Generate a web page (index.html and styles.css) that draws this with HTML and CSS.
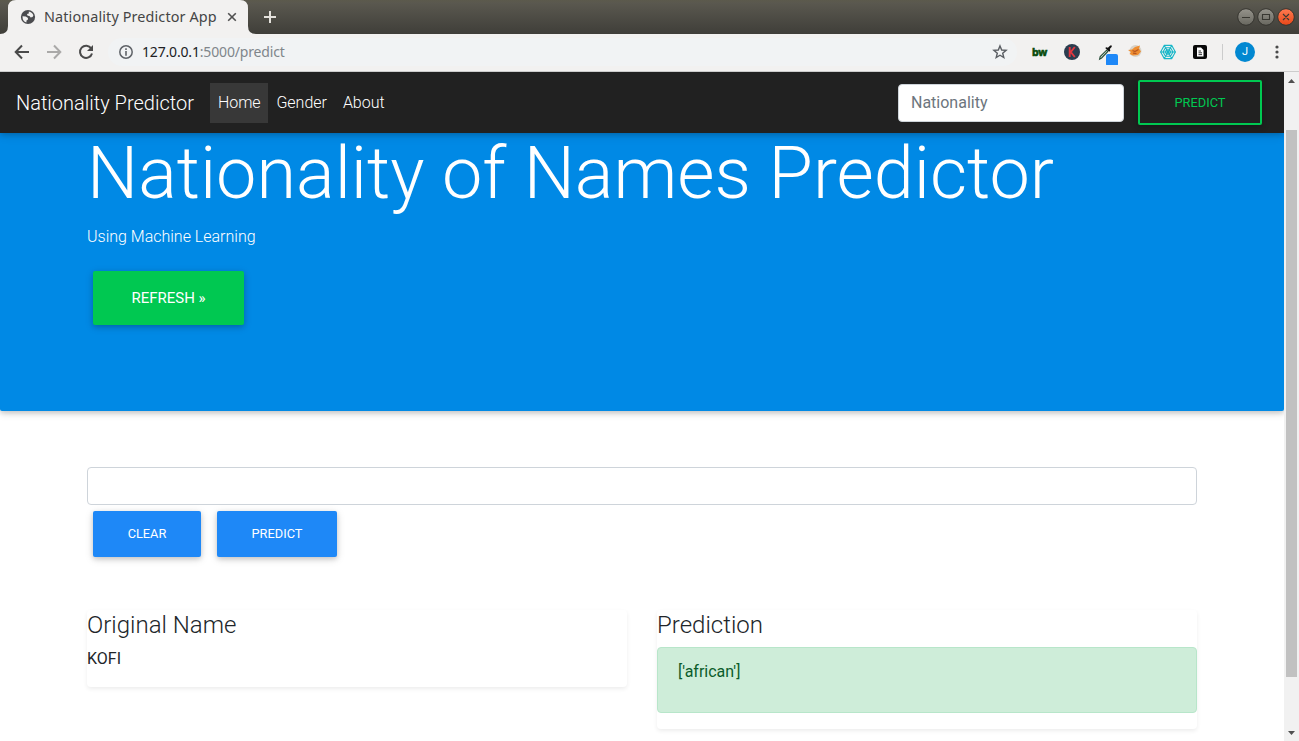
FILE: index.html
```html
<!DOCTYPE html>
<html lang="en">
<head>
<meta charset="utf-8">
<title>Nationality Predictor App</title>
<link rel="stylesheet" href="styles.css">
</head>
<body>
<header class="tabstrip">
  <svg class="tab-shape" width="264" height="34" viewBox="0 0 264 34"><path d="M0 34Q8 34 8 26V8Q8 0 16 0H240Q248 0 248 8V26Q248 34 256 34Z" fill="#f2f1f0"/></svg>
  <div class="tab">
    <svg width="16" height="16" viewBox="0 0 16 16"><circle cx="8" cy="8" r="7.1" fill="#4b4c4f"/><path d="M2.5 7.2L5.8 7.6 8 9 7.8 10.8 6.5 11.4 6.4 13.6Q2.5 12.6 2.5 7.2ZM8.8 2.4Q12 2.8 13.4 6.2L12.6 8 10.6 8.6 9.8 7.2 7.4 6.6 7 5 8.8 4.4Z" fill="#f2f1f0"/></svg>
    <span class="tab-title">Nationality Predictor App</span>
    <svg class="tab-close" width="10" height="10" viewBox="0 0 10 10"><path d="M1.2 1.2L8.8 8.8M8.8 1.2L1.2 8.8" stroke="#505050" stroke-width="1.6"/></svg>
  </div>
  <svg class="new-tab" width="12" height="12" viewBox="0 0 12 12"><path d="M6 0V12M0 6H12" stroke="#e4e1dc" stroke-width="2"/></svg>
  <div class="window-buttons">
    <svg width="58" height="20" viewBox="0 0 58 20">
      <defs><linearGradient id="gray" x2="0" y2="1"><stop stop-color="#96948c"/><stop offset="1" stop-color="#68675f"/></linearGradient><linearGradient id="red" x2="0" y2="1"><stop stop-color="#ff7b52"/><stop offset="1" stop-color="#e94718"/></linearGradient></defs>
      <g stroke="#35342f"><circle cx="9" cy="10" r="8.3" fill="url(#gray)"/><circle cx="29" cy="10" r="8.3" fill="url(#gray)"/><circle cx="49" cy="10" r="8.3" fill="url(#red)"/></g>
      <path d="M5 10.5H13M25.5 7.5H32.5V12.5H25.5ZM46 7L52 13M52 7L46 13" fill="none" stroke="#393832" stroke-width="1.1"/>
    </svg>
  </div>
</header>
<div class="toolbar">
  <div class="nav-icons">
    <svg width="16" height="16" viewBox="0 0 16 16"><path d="M15 8H2M8 1.5L1.7 8 8 14.5" fill="none" stroke="#4a4a4a" stroke-width="2"/></svg>
    <svg width="16" height="16" viewBox="0 0 16 16"><path d="M1 8H14M8 1.5L14.3 8 8 14.5" fill="none" stroke="#aaa9a8" stroke-width="2"/></svg>
    <svg width="16" height="16" viewBox="0 0 16 16"><path d="M13.2 4.4A6.1 6.1 0 1 0 14 9.4" fill="none" stroke="#4a4a4a" stroke-width="2"/><path d="M15 1V7H9Z" fill="#4a4a4a"/></svg>
  </div>
  <div class="omnibox">
    <svg width="14" height="14" viewBox="0 0 14 14"><circle cx="7" cy="7" r="6.2" fill="none" stroke="#5f6368" stroke-width="1.5"/><path d="M7 3.2V5M7 6V10.7" stroke="#5f6368" stroke-width="1.6"/></svg>
    <span class="url"><span class="host">127.0.0.1</span>:5000/predict</span>
    <svg class="star" width="16" height="16" viewBox="0 0 16 16"><path d="M8 1.9L9.7 6 14.1 6.3 10.7 9.2 11.8 13.5 8 11.2 4.2 13.5 5.3 9.2 1.9 6.3 6.3 6Z" fill="none" stroke="#5a5e63" stroke-width="1.4"/></svg>
  </div>
  <div class="extensions">
    <span class="bw">bw</span>
    <svg class="ext-k" width="16" height="16" viewBox="0 0 16 16"><circle cx="8" cy="8" r="8" fill="#2b3d4f"/><path d="M5.7 3V13M10.8 3L6.8 8 10.8 13" fill="none" stroke="#e2373f" stroke-width="1.9"/></svg>
    <svg class="ext-picker" width="20" height="22" viewBox="0 0 20 22"><path d="M1.6 16.2L2.2 13.6 8.6 7.2 9.8 8.4 3.6 15Z" fill="#dbe8df" stroke="#254b37" stroke-width="1.1"/><path d="M7.2 5L8.4 4.2 9.9 4.8 12 2.7Q13.8 1.6 13.8 3.8L11.8 6 12.4 7.6 11.2 8.8Z" fill="#111"/><rect x="8" y="11" width="12" height="12" rx="2" fill="#1e88f7"/></svg>
    <svg class="ext-fox" width="16" height="16" viewBox="0 0 16 16"><circle cx="8.5" cy="7" r="6" fill="#d7d2c8"/><path d="M1 6L5 5.5 8 3 13 1.5 12 4.5 14 7.5 11 11 6 11.5 2.5 10 4 8Z" fill="#ee8d31"/><path d="M5.5 6.5L8 7.6 11.5 5.5M6 9.2L9.5 9.7" fill="none" stroke="#b65620" stroke-width="1.2"/></svg>
    <svg class="ext-web" width="16" height="16" viewBox="0 0 16 16" fill="none" stroke="#18b7c8" stroke-width="1.1"><path d="M4.3 1.4H11.7L15.4 8 11.7 14.6H4.3L.6 8ZM5.5 3.7H10.5L13 8 10.5 12.3H5.5L3 8ZM6.6 5.7H9.4L10.7 8 9.4 10.3H6.6L5.3 8ZM0 8H16M4 1L12 15M12 1L4 15"/></svg>
    <svg class="ext-doc" width="14" height="14" viewBox="0 0 14 14"><rect width="14" height="14" rx="2" fill="#080808"/><path d="M4 2.5H8L10.5 5V11.5H4Z" fill="#fff"/><path d="M5.5 6H8M5.5 7.8H9M5.5 9.6H9" stroke="#222" stroke-width=".9"/></svg>
    <span class="divider"></span>
    <span class="avatar">J</span>
    <svg class="menu" width="4" height="14" viewBox="0 0 4 14" fill="#4a4a4a"><circle cx="2" cy="2" r="1.6"/><circle cx="2" cy="7" r="1.6"/><circle cx="2" cy="12" r="1.6"/></svg>
  </div>
</div>
<div class="viewport">
  <div class="page">
    <nav class="navbar">
      <a class="brand">Nationality Predictor</a>
      <a class="nav-link active">Home</a><a class="nav-link">Gender</a><a class="nav-link">About</a>
      <form class="search"><input class="control" type="text" placeholder="Nationality"><button class="btn outline" type="button">Predict</button></form>
    </nav>
    <section class="hero">
      <div class="container">
        <h1>Nationality of Names Predictor</h1>
        <p>Using Machine Learning</p>
        <button class="btn success" type="button">Refresh »</button>
      </div>
    </section>
    <main class="container">
      <form class="predict-form">
        <input class="control" type="text" aria-label="Name">
        <div class="actions"><button class="btn primary clear" type="button">Clear</button><button class="btn primary submit" type="button">Predict</button></div>
      </form>
      <div class="results">
        <section class="card"><h3>Original Name</h3><p>KOFI</p></section>
        <section class="card"><h3>Prediction</h3><div class="alert"><p>['african']</p></div></section>
      </div>
    </main>
  </div>
  <div class="scrollbar">
    <svg width="7" height="4" viewBox="0 0 7 4"><path d="M0 4L3.5 0 7 4Z" fill="#505050"/></svg>
    <div class="thumb"></div>
    <svg width="7" height="4" viewBox="0 0 7 4"><path d="M0 0L3.5 4 7 0Z" fill="#505050"/></svg>
  </div>
</div>
</body>
</html>
```
FILE: styles.css
```css
* { box-sizing: border-box; }
body { margin: 0; height: 741px; overflow: hidden; display: flex; flex-direction: column; background: #fff; color: #212529; font: 400 16px/1.5 Roboto, sans-serif; }
svg { display: block; flex: none; }
h1, h3, p { margin: 0; }

.tabstrip { position: relative; flex: none; height: 34px; display: flex; align-items: center; background: linear-gradient(#5c5a4c 0, #5a584f 3px, #3f3e39 100%); }
.tab-shape { position: absolute; left: 0; top: 0; }
.tab { position: relative; width: 248px; padding-left: 20px; display: flex; align-items: center; }
.tab-title { width: 175px; margin-left: 8px; font: 400 14.4px/20px "Noto Sans", sans-serif; letter-spacing: .12px; white-space: nowrap; color: #454545; }
.tab-close { margin-left: 8px; }
.new-tab { margin-left: 16px; }
.window-buttons { margin: 0 4px 0 auto; }

.toolbar { flex: none; height: 38px; display: flex; align-items: center; padding: 0 0 1px 14px; background: #f2f1f0; border-bottom: 1px solid #ccc; }
.nav-icons { display: flex; gap: 16px; }
.omnibox { width: 909px; height: 28px; margin-left: 14px; padding: 0 9px 0 11px; border-radius: 14px; background: #f1f3f4; display: flex; align-items: center; }
.url { margin-left: 9px; font: 14px/20px "Noto Sans", sans-serif; letter-spacing: -.17px; white-space: nowrap; color: #80868b; }
.host { color: #202124; }
.star { margin-left: auto; }
.extensions { display: flex; align-items: center; margin-left: 15px; }
.bw { width: 16px; font: 700 10.5px/16px "Noto Sans", sans-serif; letter-spacing: -.2px; color: #064b0b; -webkit-text-stroke: .6px #064b0b; }
.ext-k { margin-left: 16px; }
.ext-picker { margin: 4px 0 0 18px; }
.ext-fox { margin-left: 9px; }
.ext-web { margin-left: 17px; }
.ext-doc { margin-left: 17px; }
.divider { width: 1px; height: 16px; margin-left: 15px; background: #ccc; }
.avatar { width: 20px; height: 20px; margin-left: 12px; border-radius: 50%; background: #0288d1; color: #fff; font-size: 11px; line-height: 20px; text-align: center; }
.menu { margin-left: 20px; }

.viewport { flex: 1; min-height: 0; display: flex; }
.page { flex: 1; overflow: hidden; }
.navbar { position: relative; z-index: 1; height: 61px; padding: 0 16px; display: flex; align-items: center; background: #212121; color: #fff; font-weight: 300; box-shadow: 0 2px 5px rgba(0,0,0,.16), 0 2px 10px rgba(0,0,0,.12); }
.brand { margin-right: 16px; font-size: 20px; line-height: 30px; }
.nav-link { padding: 8px; letter-spacing: -.02px; }
.active { width: 58px; margin-right: .5px; background: #383838; }
.search { margin-left: auto; display: flex; align-items: center; }
.search .control { width: 226px; margin-right: 8px; }
.control { display: block; width: 100%; height: 38px; padding: 6px 12px; border: 1px solid #ced4da; border-radius: 4px; background: #fff; font: 400 16px/24px Roboto, sans-serif; }
.control::placeholder { color: #6c757d; opacity: 1; }

.btn { margin: 6px; padding: 0; border: 0; border-radius: 2px; color: #fff; font: 400 12.8px/19.2px Roboto, sans-serif; text-transform: uppercase; white-space: nowrap; box-shadow: 0 2px 5px rgba(0,0,0,.16), 0 2px 10px rgba(0,0,0,.12); }
.outline { width: 124px; height: 45px; border: 2px solid #00c851; background: transparent; color: #00c851; }
.success { width: 151px; height: 54px; font-size: 15px; background: #00c851; }
.primary { height: 46px; background: #1e88f7; }
.clear { width: 108px; }
.submit { width: 120px; }

.container { width: 1110px; margin: 0 auto; }
.hero { height: 278px; background: #0089e5; border-radius: 0 0 2px 2px; color: #fff; box-shadow: 0 2px 5px rgba(0,0,0,.16), 0 2px 10px rgba(0,0,0,.12); display: flow-root; }
.hero .container { margin-left: 87px; }
.hero h1 { margin: -2px 0 8px; font-size: 72px; line-height: 86.4px; font-weight: 300; white-space: nowrap; }
.hero p { margin-bottom: 16px; font-weight: 300; }
.predict-form { margin-top: 56px; }
.actions { display: flex; gap: 4px; }
.results { margin-top: 47px; display: grid; grid-template-columns: 1fr 1fr; gap: 30px; align-items: start; }
.card { padding: 1px 0 .1px; border-radius: 4px; box-shadow: 0 2px 4px rgba(0,0,0,.075); }
.card h3 { margin-bottom: 7px; font-size: 24px; line-height: 28.8px; font-weight: 300; }
.card p { margin-bottom: 16px; }
.alert { margin-bottom: 16px; padding: 12px 20px; border: 1px solid #b8e6ca; border-radius: 4px; background: #ceedd9; color: #0b5c2b; }

.scrollbar { width: 15px; padding: 7px 0 6px; display: flex; flex-direction: column; align-items: center; background: #f1f1f1; }
.thumb { width: 11px; height: 547px; margin: 47px 0 auto; background: #c1c1c1; }
```
